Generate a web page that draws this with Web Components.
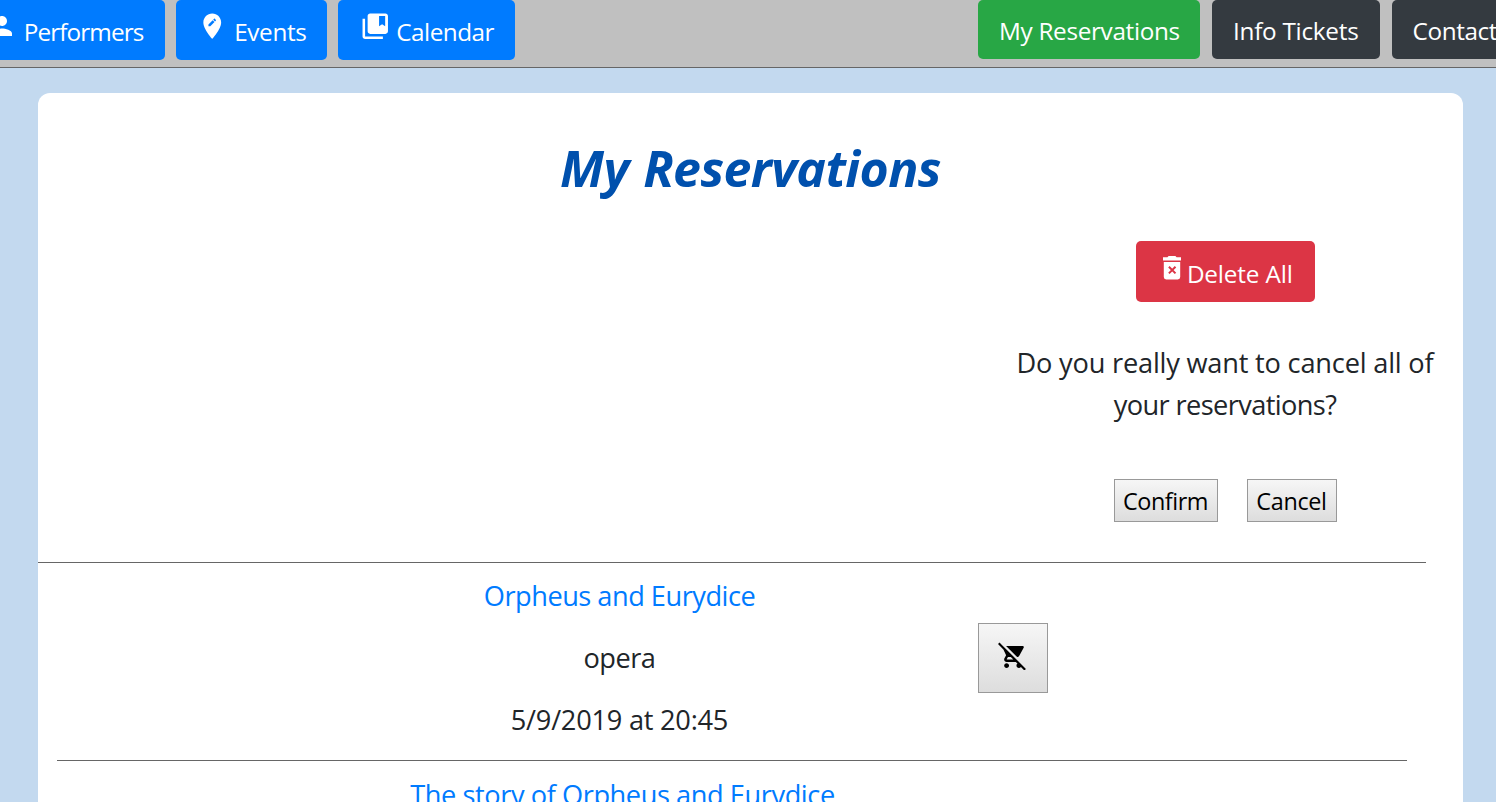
<!DOCTYPE html>
<html lang="en">
<head>
<meta charset="utf-8">
<title>My Reservations</title>
<style>
html,body{margin:0;height:100%;overflow:hidden}
body{background:#c3d9ef;font-family:"Open Sans","Noto Sans",sans-serif;color:#212529}
.person{--w:199px;--icon-x:21px;--icon-y:11.2px;--icon:30px;--text-x:57.8px;--ls:-.9px}
.events{--w:151px;--icon-x:21.2px;--text-x:58.2px;--ls:-.36px}
.calendar{--w:177px;--icon-x:21.6px;--text-x:58.3px;--ls:-.51px}
.reservations{--bg:#28a745;--w:222px;--ls:-.32px;--text-x:21px}
.info{--w:168px;--ls:-.26px;--text-x:21px}
.contact{--w:126px;--ls:-.4px;--text-x:20.6px}
</style>
</head>
<body>
<site-header>
  <nav-button class="person" icon="person">Performers</nav-button>
  <nav-button class="events" icon="pin">Events</nav-button>
  <nav-button class="calendar" icon="book">Calendar</nav-button>
  <nav-button slot="end" class="reservations">My Reservations</nav-button>
  <nav-button slot="end" class="info">Info Tickets</nav-button>
  <nav-button slot="end" class="contact">Contact</nav-button>
</site-header>
<reservations-card heading="My Reservations">
  <cancel-panel></cancel-panel>
  <reservation-item kind="opera" when="5/9/2019 at 20:45" style="--ls:-.495px">Orpheus and Eurydice</reservation-item>
  <reservation-item brief style="--ls:-.43px;--shift:6px;--top:12.5px">The story of Orpheus and Eurydice</reservation-item>
</reservations-card>
<script>
const ICONS = {
  person: '<path d="M12 12c2.21 0 4-1.79 4-4s-1.79-4-4-4-4 1.79-4 4 1.79 4 4 4zm0 2c-2.67 0-8 1.34-8 4v2h16v-2c0-2.66-5.33-4-8-4z"/>',
  pin: '<path d="M12 2C8.14 2 5 5.14 5 9c0 5.25 7 13 7 13s7-7.75 7-13c0-3.86-3.14-7-7-7zm-1.56 10H9v-1.44l3.35-3.34 1.43 1.43L10.44 12zm4.45-4.45l-.7.7-1.44-1.44.7-.7c.15-.15.39-.15.54 0l.9.9c.15.15.15.39 0 .54z"/>',
  book: '<path d="M4 6H2v14c0 1.1.9 2 2 2h14v-2H4V6z"/><path fill-rule="evenodd" d="M20 2H8c-1.1 0-2 .9-2 2v12c0 1.1.9 2 2 2h12c1.1 0 2-.9 2-2V4c0-1.1-.9-2-2-2zM15 4h4.8v8l-2.4-1.5L15 12z"/>'
};
const define = (name, html, setup) => customElements.define(name, class extends HTMLElement {
  constructor() {
    super();
    this.attachShadow({mode: 'open'}).innerHTML = html;
  }
  connectedCallback() { if (setup) setup(this, this.shadowRoot); }
});

define('site-header', `<style>
:host{display:flex;height:67px;background:#c0c0c0;border-bottom:1px solid #666;overflow:hidden}
div{display:flex;flex:none;align-items:flex-start}
.start{gap:11px;margin-left:-34px}
.end{gap:12px;margin-left:463px}
</style><div class="start"><slot></slot></div><div class="end"><slot name="end"></slot></div>`);

define('nav-button', `<style>
:host{display:flex;flex:none;box-sizing:border-box;width:var(--w);height:59px;border-radius:5px;background:var(--bg,#343a40);color:#fff;font-size:24.3px;line-height:36px;white-space:nowrap;align-items:flex-start}
:host([icon]){height:60px;background:#007bff}
.icon{flex:none;display:none;width:var(--text-x,20px);box-sizing:border-box;padding:var(--icon-y,10.6px) 0 0 var(--icon-x,0)}
:host([icon]) .icon{display:block}
svg{display:block;width:var(--icon,30.5px);height:var(--icon,30.5px);fill:#fff}
.label{padding-top:13px;padding-left:var(--text-x,20px);letter-spacing:var(--ls)}
:host([icon]) .label{padding-top:14px;padding-left:0}
</style><span class="icon"><svg viewBox="0 0 24 24"></svg></span><span class="label"><slot></slot></span>`,
  (el, root) => { root.querySelector('svg').innerHTML = ICONS[el.getAttribute('icon')] || ''; });

define('reservations-card', `<style>
:host{display:flex;flex-direction:column;box-sizing:border-box;width:1425px;height:709px;margin:25px 0 0 38px;padding-top:45px;background:#fff;border-radius:12px 12px 0 0;overflow:hidden}
h1{flex:none;margin:0;font-size:50px;line-height:60px;font-weight:700;font-style:italic;letter-spacing:-.58px;word-spacing:2px;text-align:center;color:#0050ad}
</style><h1></h1><slot></slot>`,
  (el, root) => { root.querySelector('h1').textContent = el.getAttribute('heading'); });

define('old-button', `<style>
:host{display:flex;flex:none;align-items:center;justify-content:center;box-sizing:border-box;border:1px solid #999;background:linear-gradient(#f6f6f6,#dddddd);color:#000;font-size:23.4px;line-height:36px}
</style><slot></slot>`);

define('cancel-panel', `<style>
:host{display:flex;flex:none;flex-direction:column;align-items:flex-end;box-sizing:border-box;width:1388px;height:365px;padding-top:43px;border-bottom:1px solid #666}
.panel{display:flex;flex-direction:column;align-items:center;width:450px;margin-right:-24px}
.delete{display:flex;align-items:flex-start;box-sizing:border-box;width:179px;height:61px;padding-left:27px;border-radius:5px;background:#dc3545;color:#fff;font-size:24.3px;line-height:36px}
.delete svg{flex:none;width:18px;height:24px;margin:15.3px 6.4px 0 0}
.delete span{padding-top:15px;white-space:nowrap;letter-spacing:-.15px}
p{margin:39.5px 0 0;font-size:27.2px;line-height:42px;text-align:center;white-space:nowrap}
.a{letter-spacing:-.2px}.b{letter-spacing:-.6px}
.actions{display:flex;gap:29px;margin-top:53.5px}
old-button{height:43px}
.yes{width:104px;letter-spacing:-.45px}
.no{width:90px;letter-spacing:-.32px}
</style><div class="panel">
<div class="delete"><svg viewBox="0 0 18 24"><path fill="#fff" d="M5.6 0h6.8l1.2 1.3H18v3.2H0V1.3h4.4z"/><path fill="#fff" d="M.8 6h16.4v15a2.4 2.4 0 0 1-2.4 2.4H3.2A2.4 2.4 0 0 1 .8 21z"/><path stroke="#dc3545" stroke-width="2" d="M5.9 10.8l6.6 6.6M12.5 10.8l-6.6 6.6"/></svg><span>Delete All</span></div>
<p><span class="a">Do you really want to cancel all of</span><br><span class="b">your reservations?</span></p>
<div class="actions"><old-button class="yes">Confirm</old-button><old-button class="no">Cancel</old-button></div>
</div>`);

define('reservation-item', `<style>
:host{display:grid;grid-template-columns:225px 675px 1fr;flex:none;box-sizing:border-box;width:1350px;height:198px;margin-left:19px;border-bottom:1px solid #666}
:host([brief]){height:41px;border:0}
:host([brief]) .action,:host([brief]) .kind,:host([brief]) .when{display:none}
.info{grid-column:2;display:flex;flex-direction:column;gap:20px;padding:var(--top,11.5px) 0 0 var(--shift,0);text-align:center;font-size:27.2px;line-height:42px;white-space:nowrap}
a{color:#007bff;letter-spacing:var(--ls)}
.kind{letter-spacing:-.5px}.when{letter-spacing:-.24px}
.action{padding:60px 0 0 21px}
old-button{width:70px;height:70px}
svg{display:block;width:29.5px;height:29.5px;margin-bottom:5px}
</style><div class="info"><a><slot></slot></a><span class="kind"></span><span class="when"></span></div>
<div class="action"><old-button><svg viewBox="0 0 24 24"><path d="M22.73 22.73L2.77 2.77 2 2l-.73-.73L0 2.54l4.39 4.39 2.21 4.66-1.35 2.45c-.16.28-.25.61-.25.96 0 1.1.9 2 2 2h7.46l1.38 1.38c-.5.36-.83.95-.83 1.62 0 1.1.89 2 1.99 2 .67 0 1.26-.33 1.62-.84L21.46 24l1.27-1.27zM7.42 15c-.14 0-.25-.11-.25-.25l.03-.12.9-1.63h2.36l2 2H7.42zm8.13-2c.75 0 1.41-.41 1.75-1.03l3.58-6.49c.08-.14.12-.31.12-.48 0-.55-.45-1-1-1H6.54l9.01 9zM7 18c-1.1 0-1.99.9-1.99 2S5.9 22 7 22s2-.9 2-2-.9-2-2-2z"/></svg></old-button></div>`,
  (el, root) => {
    root.querySelector('.kind').textContent = el.getAttribute('kind') || '';
    root.querySelector('.when').textContent = el.getAttribute('when') || '';
  });
</script>
</body>
</html>
